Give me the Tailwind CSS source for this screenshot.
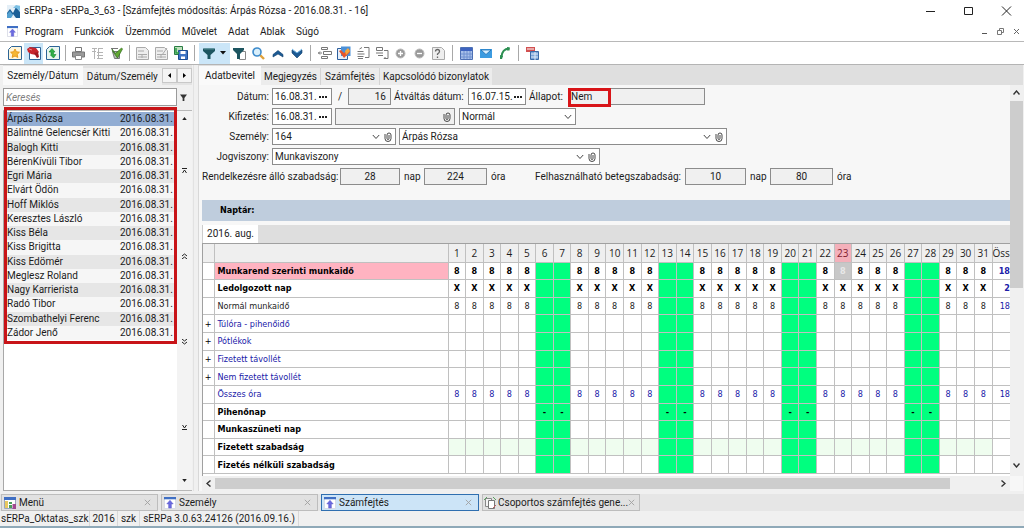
<!DOCTYPE html>
<html lang="hu">
<head>
<meta charset="utf-8">
<title>sERPa</title>
<script src="https://cdn.jsdelivr.net/npm/@tailwindcss/browser@4"></script>
</head>
<body class="flex h-screen min-h-[528px] flex-col overflow-hidden bg-[#f0f0f0] font-['Roboto','Open_Sans',sans-serif] text-[10px] leading-[14px] text-[#1c1c1c]">

<svg class="hidden">
  <symbol id="clip" viewBox="0 0 8 10"><path d="M1 2v4.500a2.700 2.700 0 0 0 6 0V3a2 2 0 0 0-4 0v3.500a1 1 0 0 0 2 0V3" fill="none" stroke="#333" stroke-width=".9"/></symbol>
  <symbol id="chev" viewBox="0 0 8 6"><path d="M.8 1l3.200 3.500L7.200 1" fill="none" stroke="#444" stroke-width="1"/></symbol>
  <symbol id="dots" viewBox="0 0 8 2"><path d="M0 0h2v2H0zM3 0h2v2H3zM6 0h2v2H6z" fill="#222"/></symbol>
  <symbol id="win" viewBox="0 0 13 13"><path d="M.5.500h12v12H.5z" fill="#fff" stroke="#d5d8e4"/><path d="M0 0h13v2.500H0z" fill="#3f6fc4"/><path d="M6.500 3.500l3.500 4H8V12H5V7.500H3z" fill="#6a6ae0" stroke="#5a55c8" stroke-width=".5"/></symbol>
  <symbol id="x" viewBox="0 0 7 7"><path d="M.8.800l5.400 5.400M6.200.800L.8 6.200" stroke="#a0a0a0" stroke-width=".9" fill="none"/></symbol>
  <symbol id="funnel" viewBox="0 0 12 12"><path d="M0 1.500h12V4L7.500 8v4h-3V8L0 4z" fill="#1d5560"/><path d="M1 2h10" stroke="#4f8a92" stroke-width="1"/></symbol>
</svg>

<header class="bg-white">
  <div class="flex h-[22px] items-center pl-[7px]">
    <svg class="mr-1 size-[13px]" viewBox="0 0 13 13"><path d="M0 0h13v13H0z" fill="#e4eff7"/><path d="M0 8l3-4 3 4 3-6 4 5v6H9L6 9l-3 4H0z" fill="#1c5f96"/><path d="M0 9l3-3 3 4-2 3H0z" fill="#53a0d0"/><path d="M6 3l3-3 4 1v5L9 3z" fill="#7cc0e4"/></svg>
    <h1 class="grow">sERPa - sERPa_3_63 - [Számfejtés módosítás: Árpás Rózsa - 2016.08.31. - 16]</h1>
    <div class="flex items-center gap-[27px] pr-3">
      <button aria-label="Kis méret"><svg class="h-3 w-[11px]" viewBox="0 0 11 12"><path d="M1 6.500h9" stroke="#222"/></svg></button>
      <button aria-label="Teljes méret"><svg class="h-3 w-[11px]" viewBox="0 0 11 12"><path d="M1.500 2.500h8v7h-8z" fill="none" stroke="#222"/></svg></button>
      <button aria-label="Bezárás"><svg class="h-3 w-[11px]" viewBox="0 0 11 12"><path d="M1 1.500l9 9M10 1.500l-9 9" stroke="#222"/></svg></button>
    </div>
  </div>
  <nav class="flex h-5 items-center border-b border-[#b8b8b8] pl-[7px]">
    <svg class="mr-[7px] size-[11px]"><use href="#win"/></svg>
    <div class="flex grow gap-[11px]">
      <button>Program</button><button>Funkciók</button><button>Üzemmód</button><button>Művelet</button><button>Adat</button><button>Ablak</button><button>Súgó</button>
    </div>
    <div class="flex items-center gap-[9px] pr-1">
      <button aria-label="Ablak kis méret"><svg class="size-[7px]" viewBox="0 0 7 7"><path d="M1 5.500h5" stroke="#555"/></svg></button>
      <button aria-label="Ablak visszaállítása"><svg class="size-[7px]" viewBox="0 0 7 7"><path d="M2.500 2V.500h4v4H5M.5 2.500h4v4h-4z" fill="none" stroke="#777"/></svg></button>
      <button aria-label="Ablak bezárása"><svg class="size-[7px]" viewBox="0 0 7 7"><path d="M1 1l5 5M6 1L1 6" stroke="#666"/></svg></button>
    </div>
  </nav>
</header>

<div class="flex h-[23px] shrink-0 items-center border-b border-[#b4b4b4] bg-white pl-[5px]" role="toolbar">
  <button aria-label="Új" class="grid size-[19px] place-items-center"><svg class="size-[14px]" viewBox="0 0 14 14"><path d="M.5 3.500l3-3h10v13H.5z" fill="#fff6dc" stroke="#2d6496"/><path d="M7 3l1.400 2.800 3 .4-2.200 2.100.6 3.100L7 10l-2.800 1.400.6-3.100-2.200-2.100 3-.4z" fill="#f5b733" stroke="#e89b1c"/></svg></button>
  <button aria-label="Módosítás" class="grid h-[21px] w-[19px] place-items-center bg-[#cbe6f8]"><svg class="size-[14px]" viewBox="0 0 14 14"><path d="M2.500 1.500h11v12h-11z" fill="#fff" stroke="#2d6496"/><path d="M0 3l3-2 6 1 3 4-3 3-5-1-3-2z" fill="#c8242c"/><path d="M7 7l4-1 1 5-2 1z" fill="#a01820"/><path d="M2 3l3 1" stroke="#f08080"/></svg></button>
  <button aria-label="Frissítés" class="grid size-[19px] place-items-center"><svg class="size-[14px]" viewBox="0 0 14 14"><path d="M.5 3.500l3-3h10v13H.5z" fill="#e9f5ee" stroke="#2d6496"/><path d="M3 6l3-3.500L9 6H7.500v2.500H10L7.500 12 4.500 9H5V6z" fill="#2fae46" stroke="#16862c" stroke-width=".6"/></svg></button>
  <span class="mx-[3px] h-4 w-px bg-[#a8a8a8]"></span>
  <button aria-label="Nyomtatás" class="grid size-[19px] place-items-center"><svg class="size-[13px]" viewBox="0 0 13 13"><path d="M3.500.500h6v4h-6z" fill="#fff" stroke="#777"/><path d="M.5 5h12v5H.5z" fill="#9a9a9a" stroke="#777"/><path d="M3.500 8.500h6v4h-6z" fill="#fff" stroke="#888"/></svg></button>
  <button aria-label="Lista" class="grid size-[19px] place-items-center"><svg class="size-[13px]" viewBox="0 0 13 13"><path d="M1 1.500h5M1 4.500h4M3.500 1v11M7 1.500h5M6 5.500h6M6 8.500h6M6 11.500h6M7.500 2v10" stroke="#b4b4b4" fill="none"/></svg></button>
  <button aria-label="Elfogadás" class="grid size-[19px] place-items-center"><svg class="size-[14px]" viewBox="0 0 14 14"><path d="M2.500 5.500h7v7h-5z" fill="#b4beb4" stroke="#777"/><path d="M2 3l3.500 4.500L11.500 2l1 1-5 9-5-7z" fill="#62a832" stroke="#2f6d1c" stroke-width=".7"/><path d="M1 2.500h7" stroke="#777"/></svg></button>
  <span class="mx-[3px] h-4 w-px bg-[#a8a8a8]"></span>
  <button aria-label="Mentés" class="grid size-[19px] place-items-center"><svg class="size-[13px]" viewBox="0 0 13 13"><path d="M.5.500h9l3 3v9H.5z" fill="#eee" stroke="#aaa"/><path d="M2 4h6M2 7.500h9M2 10h9M6 7v4" stroke="#aaa"/></svg></button>
  <button aria-label="Mentés másként" class="grid size-[19px] place-items-center"><svg class="size-[13px]" viewBox="0 0 13 13"><path d="M.5.500h9l3 3v9H.5z" fill="#eee" stroke="#aaa"/><path d="M2 4h6M2 7.500h9M2 10h9M6 7v4M12 1L7 8" stroke="#aaa"/></svg></button>
  <button aria-label="Mentés és bezárás" class="grid size-[19px] place-items-center"><svg class="size-[14px]" viewBox="0 0 14 14"><path d="M.5.500h8v8h-8z" fill="#bfe0bd" stroke="#2a7d44"/><path d="M4.500 4.500h9v9h-9z" fill="#3e74c4" stroke="#1c4d92"/><path d="M6.500 5h5v3h-5zM7 10.500h4V13H7z" fill="#fff"/><path d="M2 2v5h3" stroke="#2a9d44" stroke-width="1.500" fill="none"/></svg></button>
  <span class="mx-1 h-4 w-px bg-[#a8a8a8]"></span>
  <button aria-label="Szűrő" class="flex h-[21px] w-[31px] items-center gap-[5px] bg-[#cbe6f8] pl-1"><svg class="size-3"><use href="#funnel"/></svg><svg class="h-1 w-1.5" viewBox="0 0 6 4"><path d="M0 0h6L3 3.500z" fill="#111"/></svg></button>
  <button aria-label="Szűrő lap" class="grid size-[19px] place-items-center"><svg class="size-[13px]" viewBox="0 0 13 13"><path d="M6.500 4.500h6v8h-6z" fill="#fff" stroke="#888"/><path d="M0 1h11v2L7 7v5H4V7L0 3z" fill="#1d5560"/></svg></button>
  <button aria-label="Keresés indítása" class="grid size-[19px] place-items-center"><svg class="size-[13px]" viewBox="0 0 13 13"><path d="M8 8l4 4" stroke="#e0a13a" stroke-width="2.400"/><circle cx="5" cy="5" r="4" fill="#d9effb" stroke="#3f8ccc" stroke-width="1.600"/></svg></button>
  <button aria-label="Előző" class="grid size-[19px] place-items-center"><svg class="h-[11px] w-3" viewBox="0 0 12 11"><path d="M1 6.500l5-4 5 4v2.500L6 6 1 9z" fill="#1c5a94" stroke="#123f6c" stroke-width=".6"/></svg></button>
  <button aria-label="Következő" class="grid size-[19px] place-items-center"><svg class="h-[11px] w-3" viewBox="0 0 12 11"><path d="M1 2l5 3 5-3v3L6 10 1 5z" fill="#1c5a94" stroke="#123f6c" stroke-width=".6"/><path d="M1 1l5 4 5-4" stroke="#6db4e6" fill="none"/></svg></button>
  <span class="mx-1 h-4 w-px bg-[#a8a8a8]"></span>
  <button aria-label="Sor beszúrása" class="grid size-[19px] place-items-center"><svg class="h-3 w-[14px]" viewBox="0 0 14 12"><path d="M3.500.500h6v2h-6zM5.500 4.500h8v3h-8zM3.500 9.500h6v2h-6zM0 6h4M2 4.500L.5 6 2 7.500" fill="none" stroke="#777"/></svg></button>
  <button aria-label="Sor módosítása" class="grid size-[19px] place-items-center"><svg class="size-[14px]" viewBox="0 0 14 14"><path d="M.5 2.500h10v11H.5z" fill="#e6effa" stroke="#2d5f9c"/><path d="M4 .500h9.500V10H4z" fill="#4a90d8"/><path d="M2 5l2-1 3 3 5-4 1 3-6 6z" fill="#e8542a"/><path d="M8 5l3-3 2 3-4 4z" fill="#f4a63c"/></svg></button>
  <button aria-label="Sor másolása" class="grid size-[19px] place-items-center"><svg class="h-3 w-[14px]" viewBox="0 0 14 12"><path d="M1.500 4.500h6M1.500 7h7M1.500 9.500h6M2 11.500h5M8 .500h5v10H9M6 .500L3.500 2" fill="none" stroke="#777"/></svg></button>
  <button aria-label="Sor beillesztése" class="grid size-[19px] place-items-center"><svg class="h-3 w-[14px]" viewBox="0 0 14 12"><path d="M1.500.500h6v3h-6zM1 6h7M3 8.500h5M9 3.500h4v8H9M10.500 10L9 11.500" fill="none" stroke="#777"/></svg></button>
  <button aria-label="Hozzáadás" class="grid size-[19px] place-items-center"><svg class="size-[11px]" viewBox="0 0 11 11"><circle cx="5.500" cy="5.500" r="4.500" fill="#9a9a9a" stroke="#bbb"/><path d="M5.500 3v5M3 5.500h5" stroke="#fff" stroke-width="1.300"/></svg></button>
  <button aria-label="Törlés" class="grid size-[19px] place-items-center"><svg class="size-[11px]" viewBox="0 0 11 11"><circle cx="5.500" cy="5.500" r="4.500" fill="#9a9a9a" stroke="#bbb"/><path d="M3 5.500h5" stroke="#fff" stroke-width="1.300"/></svg></button>
  <button aria-label="Súgó lap" class="grid size-[19px] place-items-center"><svg class="size-[13px]" viewBox="0 0 13 13"><path d="M.5.500h9l3 3v9H.5z" fill="#eee" stroke="#aaa"/><path d="M3.500 4.500q0-2 2-2t2 2q0 1.200-2 2.500v1M5.500 9.500V11" fill="none" stroke="#666" stroke-width="1.300"/></svg></button>
  <span class="mx-1 h-4 w-px bg-[#a8a8a8]"></span>
  <button aria-label="Számológép" class="grid size-[19px] place-items-center"><svg class="size-[13px]" viewBox="0 0 13 13"><path d="M.5.500h12v12H.5z" fill="#a9c1ea" stroke="#4d70b4"/><path d="M1 1h11v3H1z" fill="#3e64c0"/><path d="M1 7h11M1 10h11M4 4v8M7 4v8M10 4v8" stroke="#6f90d0"/></svg></button>
  <button aria-label="E-mail" class="grid size-[19px] place-items-center"><svg class="h-[9px] w-3" viewBox="0 0 12 9"><path d="M0 0h12v9H0z" fill="#3c9be0"/><path d="M1 1l5 4.500L11 1z" fill="#d8efff" stroke="#1c6cb0" stroke-width=".8"/></svg></button>
  <button aria-label="Telefon" class="grid size-[19px] place-items-center"><svg class="size-3" viewBox="0 0 12 12"><path d="M10 1.500Q3 2 2.500 10" fill="none" stroke="#2c8f52" stroke-width="2"/><path d="M8 0l3 .500-.5 3H8zM1 8l3 1-1 3H1z" fill="#2c8f52"/></svg></button>
  <span class="mx-1 h-4 w-px bg-[#a8a8a8]"></span>
  <button aria-label="Kilépés" class="grid size-[19px] place-items-center"><svg class="size-[13px]" viewBox="0 0 13 13"><path d="M0 0h9v5H0z" fill="#d25050"/><path d="M1 2h7" stroke="#fff"/><path d="M4.500 4.500h8v8h-8z" fill="#7da4d8" stroke="#3b6aa8"/><path d="M5 7h7M5 10h7M9 5v8" stroke="#dfeaf8"/></svg></button>
</div>

<div class="flex min-h-0 grow">
  <aside class="flex w-[194px] shrink-0 flex-col border-r border-[#e2e2e2] pr-px pl-[3px]">
    <div class="flex h-5 items-end bg-[#e3e3e3]" role="tablist">
      <button role="tab" class="h-[19px] w-20 bg-[#fafafa]">Személy/Dátum</button>
      <button role="tab" class="h-[17px] w-20 bg-[#f0f0f0] whitespace-nowrap">Dátum/Személy</button>
      <button aria-label="Balra" class="grid h-[15px] w-[15px] place-items-center self-center border border-[#c8c8c8] bg-[#f4f4f4]"><svg class="h-[5px] w-[3px]" viewBox="0 0 3 5"><path d="M3 0v5L0 2.500z"/></svg></button>
      <button aria-label="Jobbra" class="grid h-[15px] w-[15px] place-items-center self-center border border-[#c8c8c8] bg-[#f4f4f4]"><svg class="h-[5px] w-[3px]" viewBox="0 0 3 5"><path d="M0 0v5l3-2.500z"/></svg></button>
    </div>
    <div class="mt-[3px] flex h-[18px] items-center">
      <input aria-label="Keresés" placeholder="Keresés" class="h-full w-[174px] border border-[#9a9a9a] bg-white pl-0.5 italic placeholder:text-[#808080]">
      <svg class="ml-[3px] size-[7px]" viewBox="0 0 12 12"><path d="M0 1h12L7.500 7v5h-3V7z" fill="#333"/></svg>
    </div>
    <div class="mt-1 flex min-h-0 grow border-t border-[#b8b8b8]">
      <div class="w-[175px] border-b border-l border-[#a8a8a8] bg-white pb-0.5">
        <div class="-mt-1 h-[237px] border-[3px] border-[#c81418] pt-0.5 pb-px">
          <ul id="people" class="flex h-full flex-col"></ul>
        </div>
      </div>
      <div class="flex w-[15px] flex-col items-center border-b border-[#b8b8b8] bg-[#f3f3f3] pt-1.5">
        <svg class="h-[3px] w-[5px]" viewBox="0 0 6 4"><path d="M0 4h6L3 0z" fill="#222"/></svg>
        <svg class="mt-12 size-[5px]" viewBox="0 0 5 5"><path d="M0 .500h5M.5 5l2-3 2 3" stroke="#222" fill="none"/></svg>
        <svg class="mt-20 h-1.5 w-[5px]" viewBox="0 0 5 6"><path d="M0 3l2.500-2L5 3M0 6l2.500-2L5 6" stroke="#222" fill="none"/></svg>
        <svg class="mt-20 h-1.5 w-[5px]" viewBox="0 0 5 6"><path d="M0 0l2.500 2L5 0M0 3l2.500 2L5 3" stroke="#222" fill="none"/></svg>
        <svg class="mt-20 size-[5px]" viewBox="0 0 5 5"><path d="M0 4.500h5M.5 0l2 3 2-3" stroke="#222" fill="none"/></svg>
        <svg class="mt-auto mb-2 h-[3px] w-[5px]" viewBox="0 0 6 4"><path d="M0 0h6L3 4z" fill="#222"/></svg>
      </div>
    </div>
  </aside>

  <main class="ml-1 flex min-w-0 grow flex-col border-l border-[#d8d8d8] pr-px">
    <div class="flex h-5 items-end bg-[#dfdfdf]" role="tablist">
      <button role="tab" class="h-[19px] w-[62px] bg-[#fafafa]">Adatbevitel</button>
      <button role="tab" class="h-[17px] w-[60px] border-r border-[#d4d4d4] bg-[#ececec]">Megjegyzés</button>
      <button role="tab" class="h-[17px] w-[59px] border-r border-[#d4d4d4] bg-[#ececec]">Számfejtés</button>
      <button role="tab" class="h-[17px] w-[112px] bg-[#ececec] whitespace-nowrap">Kapcsolódó bizonylatok</button>
    </div>
    <div class="flex min-h-0 grow bg-[#f7f7f7]">
      <div class="flex min-w-0 grow flex-col pl-[3px]">
        <form class="flex flex-col gap-[3px] pt-[3px] whitespace-nowrap">
          <div class="flex h-[17px] items-center">
            <label for="datum" class="w-[67px] text-right">Dátum:</label>
            <div class="ml-[3px] flex h-full w-[60px] items-center border border-[#8c8c8c] bg-white pr-1 pl-0.5"><input id="datum" value="16.08.31." class="w-10 grow"><button type="button" aria-label="Dátum választása"><svg class="h-0.5 w-2"><use href="#dots"/></svg></button></div>
            <label for="szam" class="w-4 text-center">/</label>
            <input id="szam" readonly value="16" class="h-full w-[43px] border border-[#8c8c8c] bg-[#f0f0f0] pr-1 text-right">
            <label for="atv" class="w-[77px] pl-[3px]">Átváltás dátum:</label>
            <div class="flex h-full w-[58px] items-center border border-[#8c8c8c] bg-white pr-[3px] pl-0.5"><input id="atv" value="16.07.15." class="w-10 grow"><button type="button" aria-label="Átváltás dátum választása"><svg class="h-0.5 w-2"><use href="#dots"/></svg></button></div>
            <label for="allapot" class="w-[42px] pl-[3px]">Állapot:</label>
            <div class="relative h-full w-[137px]">
              <input id="allapot" readonly value="Nem" class="h-full w-full border border-[#8c8c8c] bg-[#f0f0f0] pl-0.5">
              <span class="absolute top-0 left-0 h-[19px] w-[43px] border-[3px] border-[#d81418]"></span>
            </div>
          </div>
          <div class="flex h-[17px] items-center">
            <label for="kif" class="w-[67px] text-right">Kifizetés:</label>
            <div class="ml-[3px] flex h-full w-[60px] items-center border border-[#8c8c8c] bg-white pr-1 pl-0.5"><input id="kif" value="16.08.31." class="w-10 grow"><button type="button" aria-label="Kifizetés választása"><svg class="h-0.5 w-2"><use href="#dots"/></svg></button></div>
            <div class="ml-[3px] flex h-full w-[120px] items-center border border-[#8c8c8c] bg-[#f0f0f0] pr-[3px]"><input aria-label="Kifizetés hivatkozás" readonly class="w-10 grow"><svg class="h-2.5 w-2"><use href="#clip"/></svg></div>
            <div class="ml-1 flex h-full w-[117px] items-center border border-[#8c8c8c] bg-white pr-[3px] pl-0.5"><select aria-label="Típus" class="w-10 grow appearance-none"><option>Normál</option></select><svg class="h-1.5 w-2"><use href="#chev"/></svg></div>
          </div>
          <div class="flex h-[17px] items-center">
            <label for="szem" class="w-[67px] text-right">Személy:</label>
            <div class="ml-[3px] flex h-full w-[124px] items-center gap-1 border border-[#8c8c8c] bg-white pr-[3px] pl-0.5"><select id="szem" class="w-10 grow appearance-none"><option>164</option></select><svg class="h-1.5 w-2"><use href="#chev"/></svg><svg class="h-2.5 w-2"><use href="#clip"/></svg></div>
            <div class="ml-[3px] flex h-full w-[328px] items-center gap-1 border border-[#8c8c8c] bg-white pr-[3px] pl-0.5"><select aria-label="Személy neve" class="w-10 grow appearance-none"><option>Árpás Rózsa</option></select><svg class="h-1.5 w-2"><use href="#chev"/></svg><svg class="h-2.5 w-2"><use href="#clip"/></svg></div>
          </div>
          <div class="flex h-[17px] items-center">
            <label for="jog" class="w-[67px] text-right">Jogviszony:</label>
            <div class="ml-[3px] flex h-full w-[328px] items-center gap-1 border border-[#8c8c8c] bg-white pr-[3px] pl-0.5"><select id="jog" class="w-10 grow appearance-none"><option>Munkaviszony</option></select><svg class="h-1.5 w-2"><use href="#chev"/></svg><svg class="h-2.5 w-2"><use href="#clip"/></svg></div>
          </div>
          <div class="flex h-[17px] items-center">
            <label for="r1" class="w-[138px]">Rendelkezésre álló szabadság:</label>
            <input id="r1" readonly value="28" class="h-full w-[60px] border border-[#8c8c8c] bg-[#f0f0f0] text-center">
            <label for="r2" class="w-6 pl-1">nap</label>
            <input id="r2" readonly value="224" class="h-full w-[63px] border border-[#8c8c8c] bg-[#f0f0f0] text-center">
            <span class="w-12 pl-1">óra</span>
            <label for="r3" class="w-[150px]">Felhasználható betegszabadság:</label>
            <input id="r3" readonly value="10" class="h-full w-[61px] border border-[#8c8c8c] bg-[#f0f0f0] text-center">
            <label for="r4" class="w-6 pl-1">nap</label>
            <input id="r4" readonly value="80" class="h-full w-[63px] border border-[#8c8c8c] bg-[#f0f0f0] text-center">
            <span class="pl-1">óra</span>
          </div>
        </form>
        <h2 class="mt-[15px] h-[21px] shrink-0 bg-[#bfcddd] pl-[18px] font-['DejaVu_Sans_Condensed',sans-serif] text-[9px] leading-[21px] font-bold text-black">Naptár:</h2>
        <div class="mt-1 flex h-[18px] shrink-0 bg-[#dedede]" role="tablist"><button role="tab" class="w-14 border-l border-[#ccc] bg-white">2016. aug.</button></div>
        <div class="min-h-0 grow overflow-hidden border-t border-l border-[#a0a0a0] bg-white pb-0.5 font-['DejaVu_Sans_Condensed',sans-serif] text-[9px] leading-3">
          <table class="h-full w-full table-fixed border-collapse whitespace-nowrap">
            <colgroup id="cols"><col class="w-[11px]"><col class="w-[234px]"></colgroup>
            <thead><tr id="days" class="h-[18px] bg-[#efefef] font-['Open_Sans',sans-serif] text-[10px]"></tr></thead>
            <tbody id="grid"></tbody>
          </table>
        </div>
        <div class="flex h-[15px] shrink-0 items-center bg-[#f0f0f0]">
          <svg class="ml-1 h-[7px] w-[5px]" viewBox="0 0 5 7"><path d="M4.500.500l-3.500 3 3.500 3" fill="none" stroke="#333" stroke-width="1.400"/></svg>
          <div class="ml-1 h-[11px] w-[735px] bg-[#cdcdcd]"></div>
          <svg class="mr-1 ml-auto h-[7px] w-[5px]" viewBox="0 0 5 7"><path d="M.5.500l3.500 3-3.500 3" fill="none" stroke="#333" stroke-width="1.400"/></svg>
        </div>
      </div>
      <div class="mb-[15px] flex w-[15px] flex-col items-center bg-[#f0f0f0] pt-[5px]">
        <svg class="h-[5px] w-[7px]" viewBox="0 0 7 5"><path d="M.5 4.500l3-3.500 3 3.500" fill="none" stroke="#333" stroke-width="1.400"/></svg>
        <div class="mt-1.5 h-[187px] w-[13px] bg-[#cdcdcd]"></div>
        <svg class="mt-auto mb-2 h-[5px] w-[7px]" viewBox="0 0 7 5"><path d="M.5.500l3 3.500 3-3.500" fill="none" stroke="#333" stroke-width="1.400"/></svg>
      </div>
    </div>
  </main>
</div>

<div class="mt-[3px] flex h-[17px] shrink-0 gap-[3px] bg-[#e6e6e6] px-px">
  <button class="flex w-[157px] items-center border border-[#bdbdbd] bg-[#e1e1e1] pr-1.5 pl-0.5"><svg class="mr-[3px] size-3" viewBox="0 0 12 12"><path d="M.5.500h11v11H.5z" fill="#fff" stroke="#9aa6c0"/><path d="M0 0h12v3H0z" fill="#3f6fc4"/><path d="M1 4h3v7H1z" fill="#e8c860"/><path d="M5 5h3v2H5zM5 8h3v3H5z" fill="#4aa05a"/><path d="M8.500 7H12v5H8.500z" fill="#a04a90"/></svg><span class="grow text-left">Menü</span><svg class="size-[7px]"><use href="#x"/></svg></button>
  <button class="flex w-[157px] items-center border border-[#bdbdbd] bg-[#e1e1e1] pr-1.5 pl-0.5"><svg class="mr-[3px] size-3"><use href="#win"/></svg><span class="grow text-left">Személy</span><svg class="size-[7px]"><use href="#x"/></svg></button>
  <button class="flex w-[158px] items-center border border-[#2f6fb0] bg-[#cce4f7] pr-1.5 pl-0.5"><svg class="mr-[3px] size-3"><use href="#win"/></svg><span class="grow text-left">Számfejtés</span><svg class="size-[7px]"><use href="#x"/></svg></button>
  <button class="flex w-[158px] items-center border border-[#bdbdbd] bg-[#e1e1e1] pr-1.5 pl-px"><svg class="mr-0.5 size-3 shrink-0" viewBox="0 0 12 12"><path d="M1.500 1.500h6v8h-6z" fill="#f4f4f4" stroke="#888"/><path d="M4.500 3.500h6v8h-6z" fill="#fff" stroke="#777"/><path d="M0 3l3-3M9 0l3 3" stroke="#5aa060"/><path d="M9 11l3-3" stroke="#c06060"/></svg><span class="grow text-left whitespace-nowrap">Csoportos számfejtés gene...</span><svg class="size-[7px] shrink-0"><use href="#x"/></svg></button>
</div>
<footer class="flex h-[15px] shrink-0 items-center leading-[15px]">
  <span class="border-r border-[#d8d8d8] pr-px pl-px">sERPa_Oktatas_szk</span>
  <span class="border-r border-[#d8d8d8] px-0.5">2016</span>
  <span class="border-r border-[#d8d8d8] px-[3px]">szk</span>
  <span class="border-r border-[#d8d8d8] px-[3px] whitespace-nowrap">sERPa 3.0.63.24126 (2016.09.16.)</span>
</footer>
<div class="h-0.5 shrink-0 bg-[#8fa9b8]"></div>

<script>
const people = ['Árpás Rózsa','Bálintné Gelencsér Kitti','Balogh Kitti','BérenKívüli Tibor','Egri Mária','Elvárt Ödön','Hoff Miklós','Keresztes László','Kiss Béla','Kiss Brigitta','Kiss Edömér','Meglesz Roland','Nagy Karrierista','Radó Tibor','Szombathelyi Ferenc','Zádor Jenő'];
document.getElementById('people').innerHTML = people.map((name, i) => {
  const bg = i === 0 ? 'bg-[#92add3]' : i % 2 ? 'bg-[#f6f6f6]' : 'bg-[#e6e6e6]';
  return `<li class="flex flex-1 items-center leading-none whitespace-nowrap ${bg}"><span class="w-[113px]">${name}</span><span>2016.08.31.</span></li>`;
}).join('');

const days = Array.from({ length: 31 }, (_, i) => i + 1);
const isWeekend = d => d % 7 === 6 || d % 7 === 0;
document.getElementById('cols').insertAdjacentHTML('beforeend', days.map(() => '<col>').join('') + '<col class="w-[18px]">');
document.getElementById('days').innerHTML =
  '<th class="border-r border-b border-[#c0c0c0]"></th><th class="border-r border-b border-[#c0c0c0]"></th>' +
  days.map(d => `<th class="border-r border-b border-[#c0c0c0] p-0 text-center font-normal ${d === 23 ? 'bg-[#f4b0ba] text-[#802030]' : ''}">${d}</th>`).join('') +
  '<th class="border-b border-[#c0c0c0] p-0 text-left font-normal">Öss</th>';

const rows = [
  { name: 'Munkarend szerinti munkaidő', bold: true, mark: '8', sum: '18', pink: true },
  { name: 'Ledolgozott nap', bold: true, mark: 'X', sum: '2' },
  { name: 'Normál munkaidő', mark: '8', sum: '18' },
  { name: 'Túlóra - pihenőidő', blue: true, plus: true },
  { name: 'Pótlékok', blue: true, plus: true },
  { name: 'Fizetett távollét', blue: true, plus: true },
  { name: 'Nem fizetett távollét', blue: true, plus: true },
  { name: 'Összes óra', blue: true, mark: '8', sum: '18' },
  { name: 'Pihenőnap', bold: true, rest: '-' },
  { name: 'Munkaszüneti nap', bold: true },
  { name: 'Fizetett szabadság', bold: true, tint: true },
  { name: 'Fizetés nélküli szabadság', bold: true },
];
document.getElementById('grid').innerHTML = rows.map(r => {
  const tone = (r.bold ? 'font-bold text-black ' : '') + (r.blue ? 'text-[#2020a8]' : '');
  const cells = days.map(d => {
    const weekend = isWeekend(d);
    let look = weekend ? 'bg-[#00ff7f]' : r.tint ? 'bg-[#effdef]' : '';
    if (r.pink && d === 23) look = 'bg-[#c8c8c8] text-[#e8e8e8]';
    return `<td class="border-r border-b border-[#c0c0c0] p-0 text-center ${look}">${weekend ? r.rest || '' : r.mark || ''}</td>`;
  }).join('');
  return `<tr class="${tone}"><td class="border-r border-b border-[#c0c0c0] p-0 text-center text-black">${r.plus ? '+' : ''}</td>` +
    `<td class="border-r border-b border-[#c0c0c0] p-0 pl-[3px] ${r.pink ? 'bg-[#ffb3c1]' : ''}">${r.name}</td>${cells}` +
    `<td class="border-b border-[#c0c0c0] p-0 text-right text-[#2020a8]">${r.sum || ''}</td></tr>`;
}).join('');
</script>
</body>
</html>
